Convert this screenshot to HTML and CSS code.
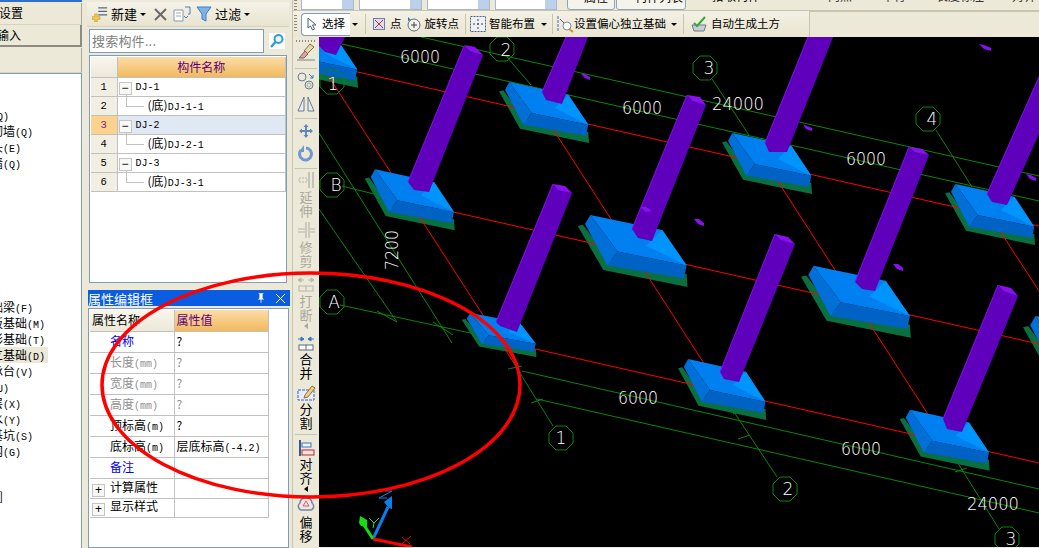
FILE: index.html
```html
<!DOCTYPE html>
<html lang="zh">
<head>
<meta charset="utf-8">
<title>属性编辑框</title>
<link rel="stylesheet" href="styles.css">
</head>
<body>
<div class="app">
  <aside class="left">
    <div class="tab tab-a"><span>设置</span></div>
    <div class="tab tab-b"><span>输入</span></div>
    <div class="tab tab-c"></div>
    <div class="list">
      <div class="li w1 first"><span><b>(Q)</b></span></div>
      <div class="li w3"><span>砌墙<b>(Q)</b></span></div>
      <div class="li w2"><span>头<b>(E)</b></span></div>
      <div class="li w2"><span>墙<b>(Q)</b></span></div>
      <div class="li w3 second"><span>基础梁<b>(F)</b></span></div>
      <div class="li w4"><span>筏板基础<b>(M)</b></span></div>
      <div class="li w4"><span>条形基础<b>(T)</b></span></div>
      <div class="li w4 sel"><span>独立基础<b>(D)</b></span></div>
      <div class="li w3"><span>桩承台<b>(V)</b></span></div>
      <div class="li w0"><span>桩<b>(U)</b></span></div>
      <div class="li w2"><span>垫层<b>(X)</b></span></div>
      <div class="li w2"><span>集水<b>(Y)</b></span></div>
      <div class="li w3"><span>基坑<b>(S)</b></span></div>
      <div class="li w2"><span>网<b>(G)</b></span></div>
      <div class="li w5 third"><span>单元]</span></div>
    </div>
  </aside>

  <section class="mid">
    <div class="mid-bar">
      <svg class="i16" viewBox="0 0 18 18"><path d="M7 2h10M7 6h10M7 10h10" stroke="#56687f" stroke-width="1.4" fill="none"/><path d="M3 9h3v3h3v3H6v3H3v-3H0v-3h3z" fill="#f4c94a" stroke="#b8902a" stroke-width=".6"/></svg>
      <span class="bar-text">新建</span><i class="caret"></i>
      <svg class="i-x" viewBox="0 0 13 13"><path d="M1 1l11 11M12 1L1 12" stroke="#6a6a6a" stroke-width="2" fill="none"/></svg>
      <svg class="i-copy" viewBox="0 0 18 16"><path d="M1 4h9v11H1z" fill="#fff" stroke="#8a98a8"/><path d="M3 7h5M3 10h5" stroke="#9aa8b8"/><path d="M12 1h5v7h-2M15 10l-2 2-2-2" fill="none" stroke="#4a7fc0"/></svg>
      <svg class="i16 filter" viewBox="0 0 16 16"><path d="M1 1h14L10 8v7L6 13V8z" fill="#7fb2e5" stroke="#3a7fc4"/></svg>
      <span class="bar-text">过滤</span><i class="caret"></i>
    </div>
    <div class="search">
      <div class="search-box">搜索构件...</div>
      <svg class="i-search" viewBox="0 0 16 16"><circle cx="9.5" cy="6" r="4" fill="#e8f6ff" stroke="#2f9ed8" stroke-width="2"/><path d="M6.5 9L2 14" stroke="#2f9ed8" stroke-width="2.4"/></svg>
    </div>
    <div class="grid-wrap tree-wrap">
      <table class="tree">
        <colgroup><col class="c-idx"><col></colgroup>
        <tr class="head"><th class="idx"></th><th class="hl">构件名称</th></tr>
        <tr><td class="idx">1</td><td class="parent"><i class="box">−</i><b>DJ-1</b></td></tr>
        <tr><td class="idx">2</td><td class="child">(底)<b>DJ-1-1</b></td></tr>
        <tr class="cur"><td class="idx">3</td><td class="parent"><i class="box">−</i><b>DJ-2</b></td></tr>
        <tr><td class="idx">4</td><td class="child">(底)<b>DJ-2-1</b></td></tr>
        <tr><td class="idx">5</td><td class="parent"><i class="box">−</i><b>DJ-3</b></td></tr>
        <tr><td class="idx">6</td><td class="child">(底)<b>DJ-3-1</b></td></tr>
      </table>
    </div>
    <div class="title">
      <span>属性编辑框</span>
      <svg class="pin" viewBox="0 0 10 12"><path d="M2 0h6v1H7v5l2 2H1l2-2V1H2zM4.500 8h1v4h-1z" fill="#fff"/></svg>
      <svg class="close" viewBox="0 0 9 9"><path d="M0 0l9 9M9 0L0 9" stroke="#fff" fill="none"/></svg>
    </div>
    <div class="grid-wrap prop-wrap">
      <table class="prop">
        <colgroup><col class="c-name"><col class="c-val"></colgroup>
        <tr class="phead"><th class="pn">属性名称</th><th class="hl left-t">属性值</th></tr>
        <tr class="r21"><td class="n blue">名称</td><td class="v">?</td></tr>
        <tr class="r21 off"><td class="n">长度<b>(mm)</b></td><td class="v">?</td></tr>
        <tr class="r21 off"><td class="n">宽度<b>(mm)</b></td><td class="v">?</td></tr>
        <tr class="r21 off"><td class="n">高度<b>(mm)</b></td><td class="v">?</td></tr>
        <tr class="r21"><td class="n">顶标高<b>(m)</b></td><td class="v">?</td></tr>
        <tr class="r21"><td class="n">底标高<b>(m)</b></td><td class="v">层底标高<b>(-4.2)</b></td></tr>
        <tr class="r21"><td class="n blue">备注</td><td class="v"></td></tr>
        <tr class="r20"><td class="g"><i class="box plus">+</i>计算属性</td><td class="v"></td></tr>
        <tr class="r19"><td class="g"><i class="box plus">+</i>显示样式</td><td class="v"></td></tr>
      </table>
    </div>
  </section>

  <main class="main">
    <div class="top1">
      <div class="grip-v"></div>
      <div class="combo c52"><em></em></div>
      <div class="combo c63"><em></em></div>
      <div class="combo c63"><em></em></div>
      <div class="combo c62"><em></em></div>
      <div class="pill p-a">属性</div>
      <div class="pill p-b">构件列表</div>
      <div class="plain p-c">拾取构件</div>
      <div class="top1-right">
        <span class="tr1">两点</span><span class="tr2">平行</span><span class="tr3">长度标注</span><span class="tr4">对齐</span>
      </div>
    </div>
    <div class="top2">
      <div class="t2-bar">
        <div class="grip-v tall"></div>
        <div class="select-btn">
          <svg class="i-arrow" viewBox="0 0 10 14"><path d="M1 1v10l2.500-2 2 4 2-1-2-4H9z" fill="#fff" stroke="#44607c"/></svg>
          <span>选择</span>
        </div>
        <i class="caret s1"></i><i class="v-sep s2"></i>
        <svg class="i12 s3" viewBox="0 0 12 12"><rect x=".5" y=".5" width="11" height="11" fill="#d8dff0" stroke="#6f7fa8"/><path d="M2 2l8 8M10 2l-8 8" stroke="#c03030"/></svg>
        <span class="t s4">点</span>
        <svg class="i16 s5" viewBox="0 0 16 16"><circle cx="8" cy="9" r="6" fill="#f4f2e6" stroke="#5a6a86"/><path d="M5 9h6M8 6v6" stroke="#404040"/><path d="M2 1l3 3-3 1z" fill="#3a6fc0"/></svg>
        <span class="t s6">旋转点</span><i class="v-sep s7"></i>
        <svg class="i16 s8" viewBox="0 0 16 16"><rect x=".5" y=".5" width="15" height="15" fill="#eef0f4" stroke="#50607a" stroke-dasharray="2 1"/><path d="M8 3v10M3 8h10" stroke="#30405a" stroke-dasharray="2 2"/></svg>
        <span class="t s9">智能布置</span><i class="caret s10"></i><i class="v-sep s11"></i>
        <svg class="i18 s12" viewBox="0 0 18 18"><path d="M2 1v15" stroke="#3a6fc0" stroke-dasharray="3 1"/><path d="M4 4l6 6" stroke="#506080"/><circle cx="11" cy="11" r="4" fill="#fff" stroke="#7a8aa0"/><path d="M13 14l4 3" stroke="#d89030" stroke-width="2"/></svg>
        <span class="t s13">设置偏心独立基础</span><i class="caret s14"></i><i class="v-sep s15"></i>
        <svg class="i16 s16" viewBox="0 0 16 16"><path d="M1 9h14l-2 6H3z" fill="#c8ccd4" stroke="#707888"/><path d="M3 7l3 3 8-9" fill="none" stroke="#38a838" stroke-width="2"/></svg>
        <span class="t s17">自动生成土方</span>
      </div>
      <div class="t2-rest"></div>
    </div>
    <div class="work">
      <nav class="tools">
        <div class="grip-h"></div>
        <svg class="ti" viewBox="0 0 20 20"><path d="M14 2l4 3-7 7-3-3z" fill="#e8d8a8" stroke="#807040"/><path d="M9 9l3 3-4 4H3z" fill="#e0a0a0" stroke="#806060"/><path d="M1 18h18" stroke="#808080"/></svg>
        <i class="h-sep m6"></i>
        <svg class="ti m2" viewBox="0 0 20 20"><circle cx="6" cy="6" r="4" fill="none" stroke="#6a7a90"/><circle cx="13" cy="14" r="4" fill="none" stroke="#6a7a90"/><circle cx="13" cy="14" r="2" fill="none" stroke="#9aa8b8"/><path d="M13 3l4 4M17 4v3h-3" stroke="#3a78c0" fill="none"/></svg>
        <svg class="ti m3" viewBox="0 0 20 20"><path d="M8 3v14H2zM12 3v14h6z" fill="#e8eaf0" stroke="#6a7a90"/></svg>
        <i class="h-sep m4"></i>
        <svg class="ti m2" viewBox="0 0 20 20"><path d="M10 3l2.500 3H11v3h3V7.500l3 2.500-3 2.500V11h-3v3h1.500L10 17l-2.500-3H9v-3H6v1.500L3 10l3-2.500V9h3V6H7.500z" fill="#5f88b8"/></svg>
        <svg class="ti m2" viewBox="0 0 20 20"><path d="M5 7a6 6 0 1 0 5-2" fill="none" stroke="#6f98d0" stroke-width="3"/><path d="M8 2v7H3z" fill="#6f98d0"/></svg>
        <i class="h-sep m5"></i>
        <svg class="ti m1 dim" viewBox="0 0 20 20"><path d="M17 2v16M13 2v16" stroke="#b4b4a8" stroke-width="1.500"/><rect x="3" y="8" width="8" height="4" fill="none" stroke="#b4b4a8" stroke-dasharray="2 1"/></svg>
        <div class="vt off">延伸</div>
        <svg class="ti m2 dim" viewBox="0 0 20 20"><path d="M10 2v16M13 2v16M2 9h7M2 12h7M14 9h5M14 12h5" stroke="#b4b4a8" stroke-width="1.200" fill="none"/></svg>
        <div class="vt off">修剪</div>
        <i class="h-sep m4"></i>
        <svg class="ti m1 dim" viewBox="0 0 20 20"><path d="M2 6h6M12 6h6M2 6l3-2v4zM18 6l-3-2v4z" stroke="#b4b4a8" fill="#c4c4b8"/><rect x="3" y="12" width="14" height="5" fill="none" stroke="#b4b4a8"/><path d="M10 12v5" stroke="#b4b4a8"/></svg>
        <div class="vt off">打断</div>
        <i class="arrow-l off-a"></i>
        <svg class="ti m4" viewBox="0 0 20 20"><path d="M2 6h6M12 6h6M8 6L5 4v4zM12 6l3-2v4z" stroke="#3a78c0" fill="#3a78c0"/><rect x="3" y="12" width="14" height="5" fill="#fff" stroke="#5a6a86"/><path d="M10 12v5" stroke="#5a6a86"/></svg>
        <div class="vt t-1">合并</div>
        <svg class="ti m3" viewBox="0 0 20 20"><rect x="2" y="7" width="16" height="10" fill="#e8eeff" stroke="#3060e0" stroke-dasharray="3 1"/><path d="M9 12L16 3l3 2-7 9-4 1z" fill="#f0d080" stroke="#907030"/></svg>
        <div class="vt t-1">分割</div>
        <i class="h-sep m4"></i>
        <svg class="ti m3" viewBox="0 0 20 20"><path d="M4 2v16" stroke="#3a5a90" stroke-width="2"/><rect x="6" y="5" width="9" height="4" fill="#f4f4f4" stroke="#3a78c0"/><rect x="6" y="12" width="12" height="5" fill="#f4e0e0" stroke="#b03030"/></svg>
        <div class="vt t-1">对齐</div>
        <i class="arrow-l"></i>
        <svg class="ti m3" viewBox="0 0 20 20"><path d="M5 15a4 4 0 0 1-1-7 5 5 0 0 1 6-5 5 5 0 0 1 6 5 4 4 0 0 1-1 7z" fill="#f0e6e6" stroke="#7088a8" stroke-width="1.500"/><path d="M10 6l3 5H7z" fill="none" stroke="#d06060"/></svg>
        <div class="vt">偏移</div>
      </nav>
      <svg class="canvas" viewBox="319 38 720 510">
        <defs>
          <g id="plate"><polygon class="pl" points="0,9.300 4.300,8.300 26,38 89.300,50 90,61 21,46.700"/></g>
          <g id="base">
            <polygon class="bl" points="6,7.700 10.300,0 32.700,31 24.300,42.700"/>
            <polygon class="bf" points="32.700,31 89.300,42.700 87,53.700 24.300,42.700"/>
            <polygon class="bt" points="10.300,0 69.300,12.700 89.300,42.700 32.700,31"/>
            <polygon class="br" points="69.300,12.700 89.300,42.700 56,26"/>
          </g>
          <polygon id="octa" class="oc" points="-5,-12 5,-12 12,-5 12,5 5,12 -5,12 -12,5 -12,-5"/>
        </defs>

        <g class="gl">
          <path d="M342 45L1039 202M421 38L1039 177M522 372L1039 490M537 400L1039 514M342 187L382 197M340 306L475 335"/>
          <path d="M319 134L452 344M319 210L397 323M553 427L510 358M777 478L732 410M999 530L956 461M507 58L531 86M712 80L749 136M936 131L972 188"/>
          <path d="M377 312l20 11M433 323l20 13M375 190l14 6M508 370l14 -3M531 404l12 -4M733 415l12 -4M738 440l12 -4M955 473l12 -4"/>
        </g>

        <use href="#plate" transform="translate(268 27.700)"/>
        <use href="#plate" transform="translate(499 83)"/>
        <use href="#plate" transform="translate(722 134)"/>
        <use href="#plate" transform="translate(945 185)"/>
        <use href="#plate" transform="translate(364.700 170.300)"/>
        <use href="#plate" transform="translate(577.700 216) scale(1.220 1.180)"/>
        <use href="#plate" transform="translate(801 266.700) scale(1.220 1.180)"/>
        <use href="#plate" transform="translate(1023 317) scale(1.200)"/>
        <use href="#plate" transform="translate(461.700 314) scale(.83 .72)"/>
        <use href="#plate" transform="translate(678 360) scale(.98 1)"/>
        <use href="#plate" transform="translate(899.700 410.700)"/>

        <g class="rl">
          <path d="M340 69L1039 227M440 210L1039 345M500 342L1039 464"/>
          <path d="M329 78L512 361M540 110L725 397M777 181L940 434M1000 232L1039 292"/>
        </g>

        <use href="#base" transform="translate(268 27.700)"/>
        <use href="#base" transform="translate(499 83)"/>
        <use href="#base" transform="translate(722 134)"/>
        <use href="#base" transform="translate(945 185)"/>
        <use href="#base" transform="translate(364.700 170.300)"/>
        <use href="#base" transform="translate(577.700 216) scale(1.220 1.180)"/>
        <use href="#base" transform="translate(801 266.700) scale(1.220 1.180)"/>
        <use href="#base" transform="translate(1023 317) scale(1.200)"/>
        <use href="#base" transform="translate(461.700 314) scale(.83 .72)"/>
        <use href="#base" transform="translate(678 360) scale(.98 1)"/>
        <use href="#base" transform="translate(899.700 410.700)"/>

        <g class="cols">
          <polygon points="319,38 345,38 336,56 325,53 319,47"/>
          <polygon points="566,38 542,93 546,101 562,105 588,38"/>
          <polygon points="808,38 765,144 769,153 787,153 833,38"/>
          <polygon points="1039,78 987,195 992,203 1007,206 1039,135"/>
          <polygon points="464,47 483,56 429,193 414,191 408,183"/>
          <polygon points="687,96 706,106 652,242 638,239 632,230"/>
          <polygon points="909,148 929,156 875,292 862,290 855,283"/>
          <polygon points="553,185 572,194 517,333 500,327 496,323"/>
          <polygon points="775,235 795,245 739,383 724,380 720,373"/>
          <polygon points="998,286 1018,297 962,433 947,430 943,420"/>
        </g>
        <g class="edges">
          <path d="M464 47L408 183M566 38L542 93M808 38L765 144M1039 78L987 195M687 96L632 230M909 148L855 283M553 185L496 323M775 235L720 373M998 286L943 420"/>
        </g>
        <g class="caps">
          <polygon points="464,46 475,48 483,56 470,52"/>
          <polygon points="687,96 700,98 706,106 693,102"/>
          <polygon points="909,148 922,150 929,156 915,153"/>
          <polygon points="553,185 565,187 572,194 558,191"/>
          <polygon points="775,235 788,238 795,245 781,241"/>
          <polygon points="998,286 1011,289 1018,297 1004,292"/>
          <polygon points="581,75 585,75 590,78 590,81 585,79"/>
          <polygon points="979,45 984,46 991,49 991,52 984,50"/>
          <polygon points="803,125 807,127 812,129 812,132 806,130"/>
          <polygon points="1026,175 1031,176 1036,179 1036,182 1030,180"/>
          <polygon points="694,220 699,220 704,224 704,227 698,225"/>
          <polygon points="893,265 898,265 903,269 903,272 897,270"/>
          <polygon points="640,208 646,208 652,212 646,213"/>
        </g>

        <use href="#octa" transform="translate(332 83)"/>
        <use href="#octa" transform="translate(502 50)"/>
        <use href="#octa" transform="translate(705 69)"/>
        <use href="#octa" transform="translate(928 120)"/>
        <use href="#octa" transform="translate(332 186)"/>
        <use href="#octa" transform="translate(332 303)"/>
        <use href="#octa" transform="translate(561 439)"/>
        <use href="#octa" transform="translate(785 490)"/>
        <use href="#octa" transform="translate(1007 540)"/>

        <g class="cad">
          <text x="333" y="91" class="ctr">1</text>
          <text x="506" y="57" class="ctr">2</text>
          <text x="709" y="75" class="ctr">3</text>
          <text x="932" y="126" class="ctr">4</text>
          <text x="336" y="192" class="ctr">B</text>
          <text x="334" y="309" class="ctr">A</text>
          <text x="561" y="445" class="ctr">1</text>
          <text x="788" y="496" class="ctr">2</text>
          <text x="1011" y="546" class="ctr">3</text>
          <text x="400" y="64" textLength="40" lengthAdjust="spacingAndGlyphs">6000</text>
          <text x="622" y="115" textLength="40" lengthAdjust="spacingAndGlyphs">6000</text>
          <text x="712" y="111" textLength="52" lengthAdjust="spacingAndGlyphs">24000</text>
          <text x="846" y="166" textLength="40" lengthAdjust="spacingAndGlyphs">6000</text>
          <text x="618" y="405" textLength="40" lengthAdjust="spacingAndGlyphs">6000</text>
          <text x="841" y="456" textLength="40" lengthAdjust="spacingAndGlyphs">6000</text>
          <text x="967" y="511" textLength="52" lengthAdjust="spacingAndGlyphs">24000</text>
          <text transform="translate(398 271) rotate(-90)" textLength="40" lengthAdjust="spacingAndGlyphs">7200</text>
        </g>

        <g class="axes">
          <path class="ax-b" d="M373 540L388 508"/>
          <polygon class="ax-bf" points="392,497 392,510 389,509 384,503"/>
          <path class="ax-g" d="M373 540L364 526"/>
          <polygon class="ax-gf" points="360,517 367,521 367,528 361,527 359,524"/>
          <path class="ax-r" d="M373 540L412 548"/>
          <path class="ax-gl" d="M369 519l5 5 5-5M374 524l-1 5"/>
          <path class="ax-bl" d="M385 492h7l-13 7h8"/>
          <path class="ax-rl" d="M402 538l8 7M411 537l-9 8"/>
        </g>
      </svg>
    </div>
  </main>
</div>
<svg class="mark" viewBox="0 0 1039 548"><ellipse cx="311" cy="385" rx="209" ry="112"/></svg>
</body>
</html>
```

FILE: styles.css
```css
* { box-sizing: border-box; }
html, body { margin: 0; padding: 0; }
body {
  width: 1039px;
  height: 548px;
  overflow: hidden;
  position: relative;
  background: #ece9d8;
  font: 12px/1.2 "Noto Sans CJK SC", "Liberation Sans", sans-serif;
  color: #000;
}
b { font: 10px "Liberation Mono", monospace; }
i { font-style: normal; }
.app { display: flex; width: 1039px; height: 548px; overflow: hidden; }

/* left pane */
.left { width: 82px; flex: none; display: flex; flex-direction: column; border-top: 2px solid #2f6fd0; }
.tab { display: flex; justify-content: flex-end; align-items: center; overflow: hidden; padding-right: 58px; font-size: 12px; background: #ece9d8; border-right: 1px solid #aca899; white-space: nowrap; }
.tab span { flex: none; }
.tab-a { height: 22px; margin-top: 1px; border-bottom: 1px solid #d8d4c0; padding-right: 58px; }
.tab-b { height: 22px; border-bottom: 2px solid #8e8c80; border-right: 2px solid #8e8c80; padding-right: 59px; }
.tab-c { height: 25px; margin-top: 1px; border-bottom: 1px solid #d8d4c0; }
.list { flex: 1; background: #fff; border-top: 1px solid #7f9db9; border-right: 1px solid #7f9db9; }
.li { height: 16px; line-height: 16px; display: flex; justify-content: flex-end; overflow: hidden; white-space: nowrap; font-size: 12px; }
.li span { flex: none; }
.first { margin-top: 33px; }
.second { margin-top: 128px; }
.third { margin-top: 29px; }
.w0 { width: 9px; }
.w1 { width: 9px; }
.w2 { width: 21px; }
.w3 { width: 33px; }
.w4 { width: 45px; }
.w5 { width: 3px; }
.sel { background: #ece9d8; width: 48px; padding-right: 3px; }

/* middle pane */
.mid { width: 210px; flex: none; padding-left: 6px; display: flex; flex-direction: column; }
.mid-bar { height: 25px; margin-top: 2px; width: 202px; display: flex; align-items: center; padding-left: 5px; background: linear-gradient(#f5f3e8, #e8e4d0); border-bottom: 1px solid #d4d0bc; margin-left: -1px; }
.i16 { width: 16px; height: 16px; flex: none; }
.i12 { width: 12px; height: 12px; flex: none; }
.i18 { width: 18px; height: 18px; flex: none; }
.bar-text { margin-left: 3px; font-size: 13px; }
.caret { width: 0; height: 0; flex: none; border-left: 3px solid transparent; border-right: 3px solid transparent; border-top: 3px solid #000; margin-left: 3px; }
.i-x { width: 13px; height: 13px; margin-left: 8px; flex: none; }
.i-copy { width: 18px; height: 16px; margin-left: 6px; flex: none; }
.filter { margin-left: 5px; }
.search { display: flex; align-items: center; height: 25px; margin-top: 1px; }
.search-box { width: 175px; height: 24px; background: #fff; border: 1px solid #7f9db9; color: #808080; font-size: 13px; line-height: 21px; padding-left: 2px; letter-spacing: .2px; margin-left: 1px; }
.i-search { width: 16px; height: 16px; margin-left: 5px; background: #fff; flex: none; }
.grid-wrap { background: #fff; border: 1px solid #7f9db9; }
.tree-wrap { width: 198px; height: 228px; margin: 2px 0 0 1px; padding: 1px 0 0 1px; }
table { border-collapse: collapse; table-layout: fixed; }
.tree { width: 195px; }
.c-idx { width: 26px; }
.head { height: 20px; }
.tree tr { height: 19px; }
.tree tr.head { height: 20px; }
th, td { border: 1px solid #c0c0c0; padding: 0; font-weight: normal; font-size: 12px; }
.tree th, .prop th { border-top: 0; }
.hl { background: linear-gradient(#fbdca8, #f2b95c); color: #5a0080; text-align: center; border-top: 0; }
.left-t { text-align: left; padding-left: 2px; }
.idx { background: #f1efe2; text-align: center; font: 10.500px "Liberation Mono", monospace; border-left: 0; }
th.idx { background: linear-gradient(#f8f6ee, #ece9d8); }
.cur .idx { background: #fdd28c; color: #7a2090; }
.cur td:last-child { background: #e0e8f4; }
.parent { padding-left: 1px; }
.box { display: inline-block; width: 13px; height: 13px; line-height: 10px; text-align: center; border: 1px solid #c4c4c4; background: #f8f8f4; font: 12px/11px "Liberation Sans", sans-serif; margin-right: 4px; vertical-align: -2px; }
.child { padding-left: 30px; position: relative; }
.child::before { content: ""; position: absolute; left: 8px; top: -2px; width: 17px; height: 11px; border-left: 1px solid #c0c0c0; border-bottom: 1px solid #c0c0c0; }

/* property panel */
.title { width: 202px; height: 16px; margin: 7px 0 0 0; background: #0a5ce0; color: #fff; font-size: 13px; line-height: 15px; display: flex; align-items: center; }
.title span { flex: 1; }
.pin { width: 8px; height: 10px; margin-right: 11px; }
.close { width: 9px; height: 9px; margin-right: 5px; }
.prop-wrap { flex: 1; width: 201px; margin-top: 2px; padding: 1px 0 0 1px; }
.prop { width: 178px; }
.c-name { width: 84px; }
.c-val { width: 94px; }
.phead { height: 21px; }
.pn { text-align: left; padding-left: 2px; background: linear-gradient(#f8f6ee, #ece9d8); border-left: 0; }
.r21 { height: 21px; }
.r20 { height: 20px; }
.r19 { height: 19px; }
.n { padding-left: 20px; white-space: nowrap; border-left: 0; }
.g { padding-left: 2px; border-left: 0; white-space: nowrap; }
.v { padding-left: 2px; white-space: nowrap; }
.blue { color: #0000f0; }
.off td { color: #909090; }
.plus { margin-right: 5px; }

/* main */
.main { flex: 1; min-width: 0; display: flex; flex-direction: column; border-left: 1px solid #c8c4b0; }
.top1 { height: 11px; display: flex; align-items: flex-end; overflow: hidden; border-bottom: 1px solid #c8c4b0; }
.grip-v { width: 3px; height: 10px; margin-left: 1px; flex: none; background: repeating-linear-gradient(#888 0 1px, #ece9d8 1px 3px); }
.grip-v.tall { height: 18px; margin-left: 1px; }
.combo { flex: none; height: 24px; background: #fff; border: 1px solid #a8b8c8; display: flex; justify-content: flex-end; margin-left: 5px; }
.combo em { width: 11px; background: #bcd0ec; }
.c52 { width: 53px; margin-left: 4px; }
.c63 { width: 63px; }
.c62 { width: 62px; }
.pill { flex: none; height: 24px; border: 1px solid #8ea4bc; border-radius: 3px; background: #f4f4ea; line-height: 20px; text-align: right; padding-right: 6px; }
.p-a { width: 48px; margin-left: 10px; }
.p-b { width: 70px; margin-left: 1px; padding-right: 2px; }
.p-c { flex: none; width: 70px; height: 24px; margin-left: 4px; line-height: 20px; text-align: right; }
.top1-right { flex: 1; height: 24px; line-height: 20px; white-space: nowrap; position: relative; display: flex; color: #333; }
.tr1 { margin-left: 68px; }
.tr2 { margin-left: 30px; }
.tr3 { margin-left: 30px; }
.tr4 { margin-left: 28px; }
.top2 { height: 26px; display: flex; }
.t2-bar { width: 516px; flex: none; display: flex; align-items: center; padding-left: 0; background: linear-gradient(#f3f1e4, #e9e5d2); }
.t2-rest { flex: 1; border-left: 1px solid #c8c4b0; border-top: 1px solid #c8c4b0; }
.select-btn { flex: none; width: 49px; height: 23px; margin-left: 4px; display: flex; align-items: center; background: #fff; border: 1px solid #7f9db9; border-right: 0; border-radius: 4px 0 0 4px; padding-left: 5px; }
.select-btn span { margin-left: 5px; font-size: 11.500px; }
.i-arrow { width: 10px; height: 14px; flex: none; }
.t { font-size: 11.500px; white-space: nowrap; flex: none; }
.v-sep { width: 1px; height: 20px; background: #c8c4b0; flex: none; }
.s1 { margin-left: 2px; }
.s2 { margin-left: 7px; }
.s3 { margin-left: 7px; }
.s4 { margin-left: 5px; }
.s5 { margin-left: 4px; }
.s6 { margin-left: 3px; }
.s7 { margin-left: 6px; }
.s8 { margin-left: 4px; }
.s9 { margin-left: 3px; }
.s10 { margin-left: 6px; }
.s11 { margin-left: 5px; }
.s12 { margin-left: 3px; }
.s13 { margin-left: 0; }
.s14 { margin-left: 5px; }
.s15 { margin-left: 6px; }
.s16 { margin-left: 7px; }
.s17 { margin-left: 4px; }
.work { flex: 1; min-height: 0; display: flex; }
.tools { width: 26px; flex: none; display: flex; flex-direction: column; align-items: center; overflow: hidden; padding-top: 3px; background: #ece9d8; }
.grip-h { width: 20px; height: 2px; flex: none; background: repeating-linear-gradient(90deg, #888 0 1px, #ece9d8 1px 3px); }
.ti { width: 20px; height: 20px; flex: none; }
.dim { opacity: .95; }
.h-sep { width: 22px; height: 1px; flex: none; background: #c8c4b0; }
.m1 { margin-top: 1px; }
.m2 { margin-top: 2px; }
.m3 { margin-top: 3px; }
.m4 { margin-top: 4px; }
.m5 { margin-top: 5px; }
.m6 { margin-top: 6px; }
.vt { width: 14px; flex: none; font-size: 13px; line-height: 14px; text-align: center; }
.vt.off { color: #a8a89c; }
.t-1 { margin-top: -1px; }
.arrow-l { width: 0; height: 0; flex: none; margin-top: 1px; border-top: 3px solid transparent; border-bottom: 3px solid transparent; border-right: 4px solid #000; }
.off-a { border-right-color: #a8a89c; }
.canvas { display: block; flex: 1; min-width: 0; height: 510px; background: #000; }

/* drawing */
.pl { fill: #0a7040; }
.bl { fill: #0070d8; }
.bf { fill: #0062c4; }
.bt { fill: #0080f0; }
.br { fill: #0094ff; }
.gl path { fill: none; stroke: #0a860a; stroke-width: 1; }
.rl path { fill: none; stroke: #f00; stroke-width: 1; }
.cols polygon { fill: #5e00bc; }
.edges path { fill: none; stroke: #8410f8; stroke-width: 1; }
.caps polygon { fill: #8a10f0; }
.oc { fill: none; stroke: #0a860a; stroke-width: 1; }
.cad text { font-family: "DejaVu Sans ExtraLight", "DejaVu Sans", sans-serif; font-weight: 200; font-size: 18px; fill: #fff; }
.cad .ctr { font-size: 17px; text-anchor: middle; }
.axes path { fill: none; }
.ax-b { stroke: #0a80f0; stroke-width: 3; }
.ax-bf { fill: #0a80f0; }
.ax-g { stroke: #10e010; stroke-width: 3; }
.ax-gf { fill: #10e010; }
.ax-r { stroke: #f00; stroke-width: 3; }
.ax-gl { stroke: #30e030; }
.ax-bl { stroke: #0a80f0; }
.ax-rl { stroke: #f01010; }

/* hand-drawn annotation over the whole window */
.mark { position: absolute; left: 0; top: 0; width: 1039px; height: 548px; pointer-events: none; }
.mark ellipse { fill: none; stroke: #f00; stroke-width: 3.500; }
```
